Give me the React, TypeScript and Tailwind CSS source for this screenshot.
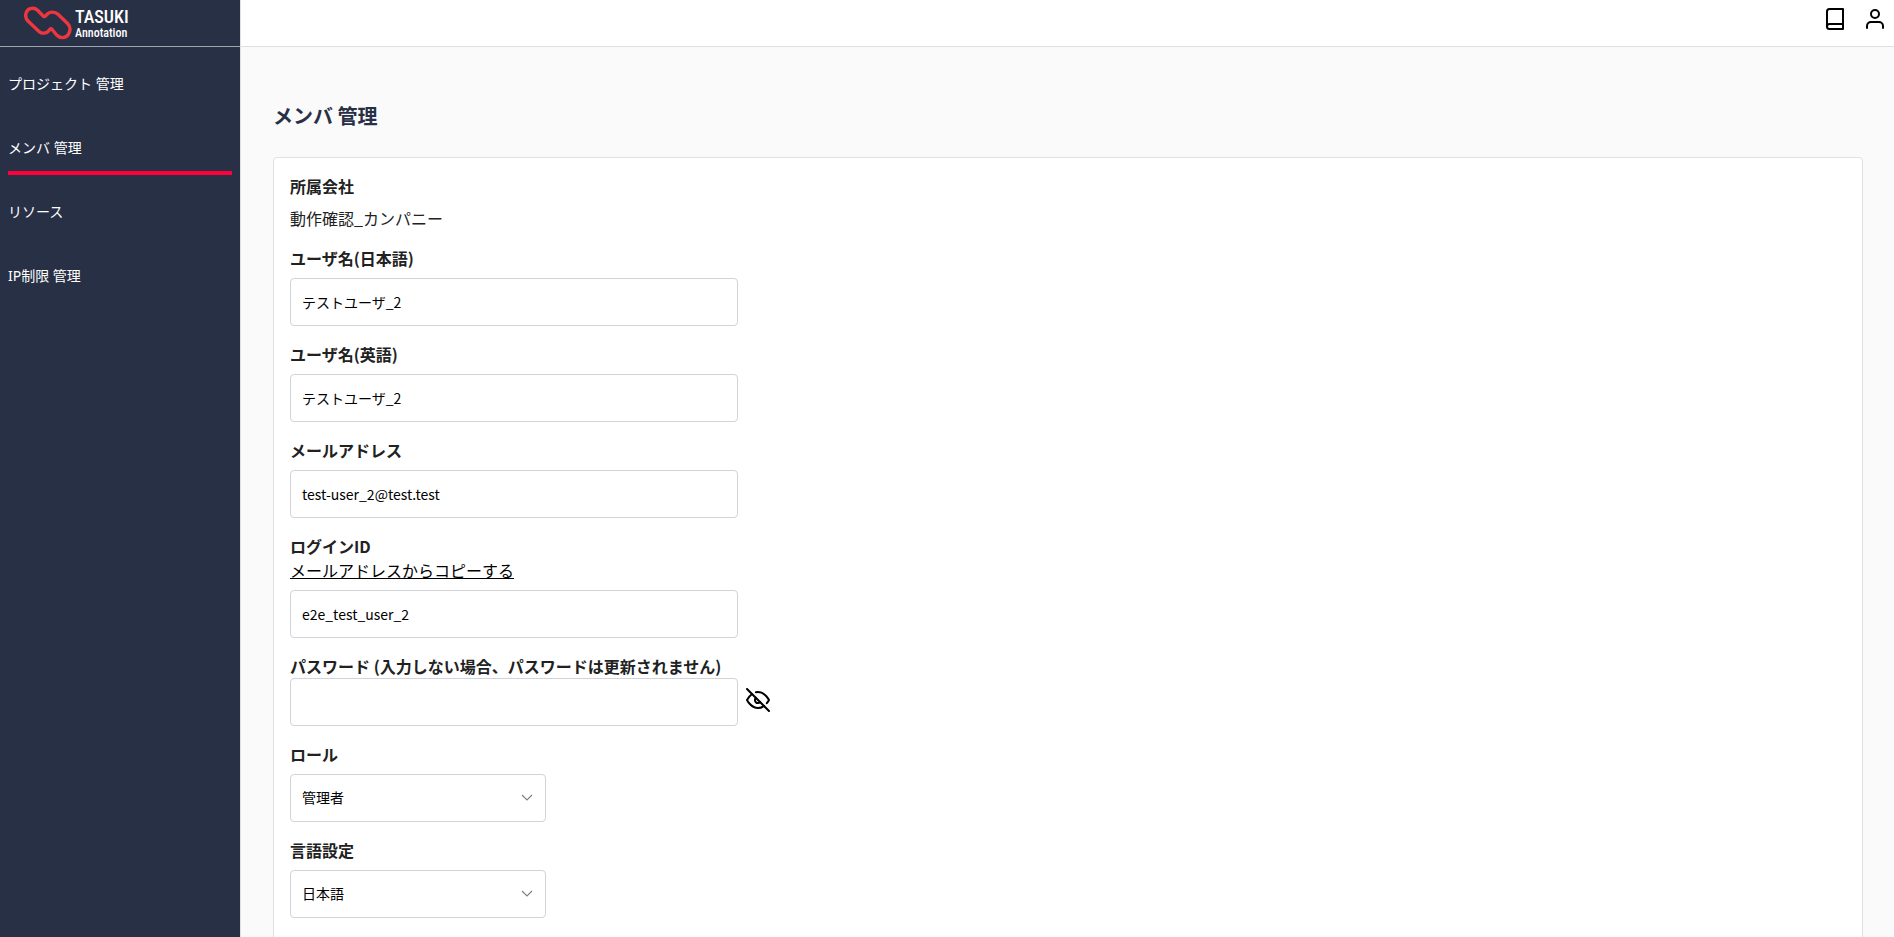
import { useState } from "react";
import type { ReactNode } from "react";
import { FiBook, FiEyeOff, FiUser } from "react-icons/fi";

const MENU = ["プロジェクト 管理", "メンバ 管理", "リソース", "IP制限 管理"];

const INPUT_CLASS =
  "block h-12 w-full max-w-md rounded-sm border border-[#ced4da] bg-white px-[11px] text-sm text-black outline-none focus:border-[#283046]";

function Logo() {
  return (
    <a href="#" className="flex items-center gap-[3px] text-white">
      <svg width="48" height="34" viewBox="0 0 48 34" fill="none" aria-hidden="true">
        <path
          d="M4 15C0 11 1.2 2.2 8.8 2.2C10.8 2.2 12.3 3 13.6 4.2L19.4 10.2Q20.3 11 21.2 10.2L23.4 8C26 5.6 31 5.4 34 8.2L43.6 17.4C48.6 22.4 45 31.6 38.4 31.6C36 31.6 34.2 30.6 32.6 29L27.9 23.2Q27 22.2 26.1 23.2L24.4 25.2C22.2 27.8 17.6 27.8 15 25.4Z"
          stroke="#ee3640"
          strokeWidth="3.4"
          strokeLinejoin="round"
        />
      </svg>
      <span className="flex flex-col font-['Liberation_Sans_Narrow','Roboto_Condensed',sans-serif] font-medium">
        <span className="text-lg leading-5">TASUKI</span>
        <span className="text-xs leading-3">Annotation</span>
      </span>
    </a>
  );
}

function Field({
  label,
  htmlFor,
  extra,
  tight,
  children,
}: {
  label: string;
  htmlFor: string;
  extra?: ReactNode;
  tight?: boolean;
  children: ReactNode;
}) {
  return (
    <div>
      <label htmlFor={htmlFor} className="block font-bold">
        {label}
      </label>
      {extra}
      <div className={tight ? "" : "mt-2"}>{children}</div>
    </div>
  );
}

function Select({ id, options }: { id: string; options: string[] }) {
  return (
    <div className="relative w-64">
      <select
        id={id}
        className="block h-12 w-full appearance-none rounded-sm border border-[#ced4da] bg-white px-[11px] pb-0.5 text-sm text-black outline-none focus:border-[#283046]"
      >
        {options.map((o) => (
          <option key={o}>{o}</option>
        ))}
      </select>
      <svg
        className="pointer-events-none absolute top-4 right-[11px] text-[#808080]"
        width="16"
        height="16"
        viewBox="0 0 16 16"
        fill="none"
        stroke="currentColor"
        strokeWidth="1.2"
        aria-hidden="true"
      >
        <path d="M3 5l5 5 5-5" />
      </svg>
    </div>
  );
}

export default function App() {
  const [nameJa, setNameJa] = useState("テストユーザ_2");
  const [nameEn, setNameEn] = useState("テストユーザ_2");
  const [email, setEmail] = useState("test-user_2@test.test");
  const [loginId, setLoginId] = useState("e2e_test_user_2");
  const [password, setPassword] = useState("");
  const [visible, setVisible] = useState(false);

  return (
    <div className="flex h-screen overflow-hidden bg-[#fafafa] font-['Noto_Sans_CJK_JP',sans-serif] text-base text-[#212121]">
      <aside className="w-60 shrink-0 bg-[#283046] text-white">
        <div className="flex h-[47px] items-center border-b border-[#a0a4ac] pl-6">
          <Logo />
        </div>
        <nav className="px-2 font-['Noto_Sans','Noto_Sans_CJK_JP',sans-serif] text-sm">
          {MENU.map((item) => (
            <a
              key={item}
              href="#"
              className={`flex h-16 items-center border-b-4 pt-3.5 ${
                item === "メンバ 管理" ? "border-[#ff0039]" : "border-transparent"
              }`}
            >
              {item}
            </a>
          ))}
        </nav>
      </aside>

      <div className="flex min-w-0 flex-1 flex-col border-l border-[#e0e0e0]">
        <header className="flex h-[47px] shrink-0 items-start justify-end gap-4 border-b border-[#e0e0e0] bg-white pt-[7px] pr-[7px] text-black">
          <button type="button" aria-label="マニュアル">
            <FiBook size={24} />
          </button>
          <button type="button" aria-label="アカウント">
            <FiUser size={24} />
          </button>
        </header>

        <main className="flex-1 overflow-hidden pt-[54px] pr-[31px] pl-8">
          <h1 className="mb-[26px] text-xl leading-[30px] font-bold text-[#283046]">メンバ 管理</h1>

          <section className="flex flex-col gap-4 rounded border border-[#dee2e6] bg-white p-4">
            <div>
              <p className="font-bold">所属会社</p>
              <p className="mt-2">動作確認_カンパニー</p>
            </div>

            <Field label="ユーザ名(日本語)" htmlFor="name-ja">
              <input id="name-ja" className={INPUT_CLASS} value={nameJa} onChange={(e) => setNameJa(e.target.value)} />
            </Field>

            <Field label="ユーザ名(英語)" htmlFor="name-en">
              <input id="name-en" className={INPUT_CLASS} value={nameEn} onChange={(e) => setNameEn(e.target.value)} />
            </Field>

            <Field label="メールアドレス" htmlFor="email">
              <input id="email" type="email" className={INPUT_CLASS} value={email} onChange={(e) => setEmail(e.target.value)} />
            </Field>

            <Field
              label="ログインID"
              htmlFor="login-id"
              extra={
                <button type="button" onClick={() => setLoginId(email)} className="block text-black underline">
                  メールアドレスからコピーする
                </button>
              }
            >
              <input id="login-id" className={INPUT_CLASS} value={loginId} onChange={(e) => setLoginId(e.target.value)} />
            </Field>

            <Field label="パスワード (入力しない場合、パスワードは更新されません)" htmlFor="password" tight>
              <div className="flex items-center gap-2">
                <input
                  id="password"
                  type={visible ? "text" : "password"}
                  className={INPUT_CLASS}
                  value={password}
                  onChange={(e) => setPassword(e.target.value)}
                />
                <button
                  type="button"
                  aria-label="パスワードを表示"
                  onClick={() => setVisible((v) => !v)}
                  className="pb-1 text-black"
                >
                  <FiEyeOff size={24} />
                </button>
              </div>
            </Field>

            <Field label="ロール" htmlFor="role">
              <Select id="role" options={["管理者", "作業者"]} />
            </Field>

            <Field label="言語設定" htmlFor="lang">
              <Select id="lang" options={["日本語", "English"]} />
            </Field>

            <div className="h-10" />
          </section>
        </main>
      </div>
    </div>
  );
}
